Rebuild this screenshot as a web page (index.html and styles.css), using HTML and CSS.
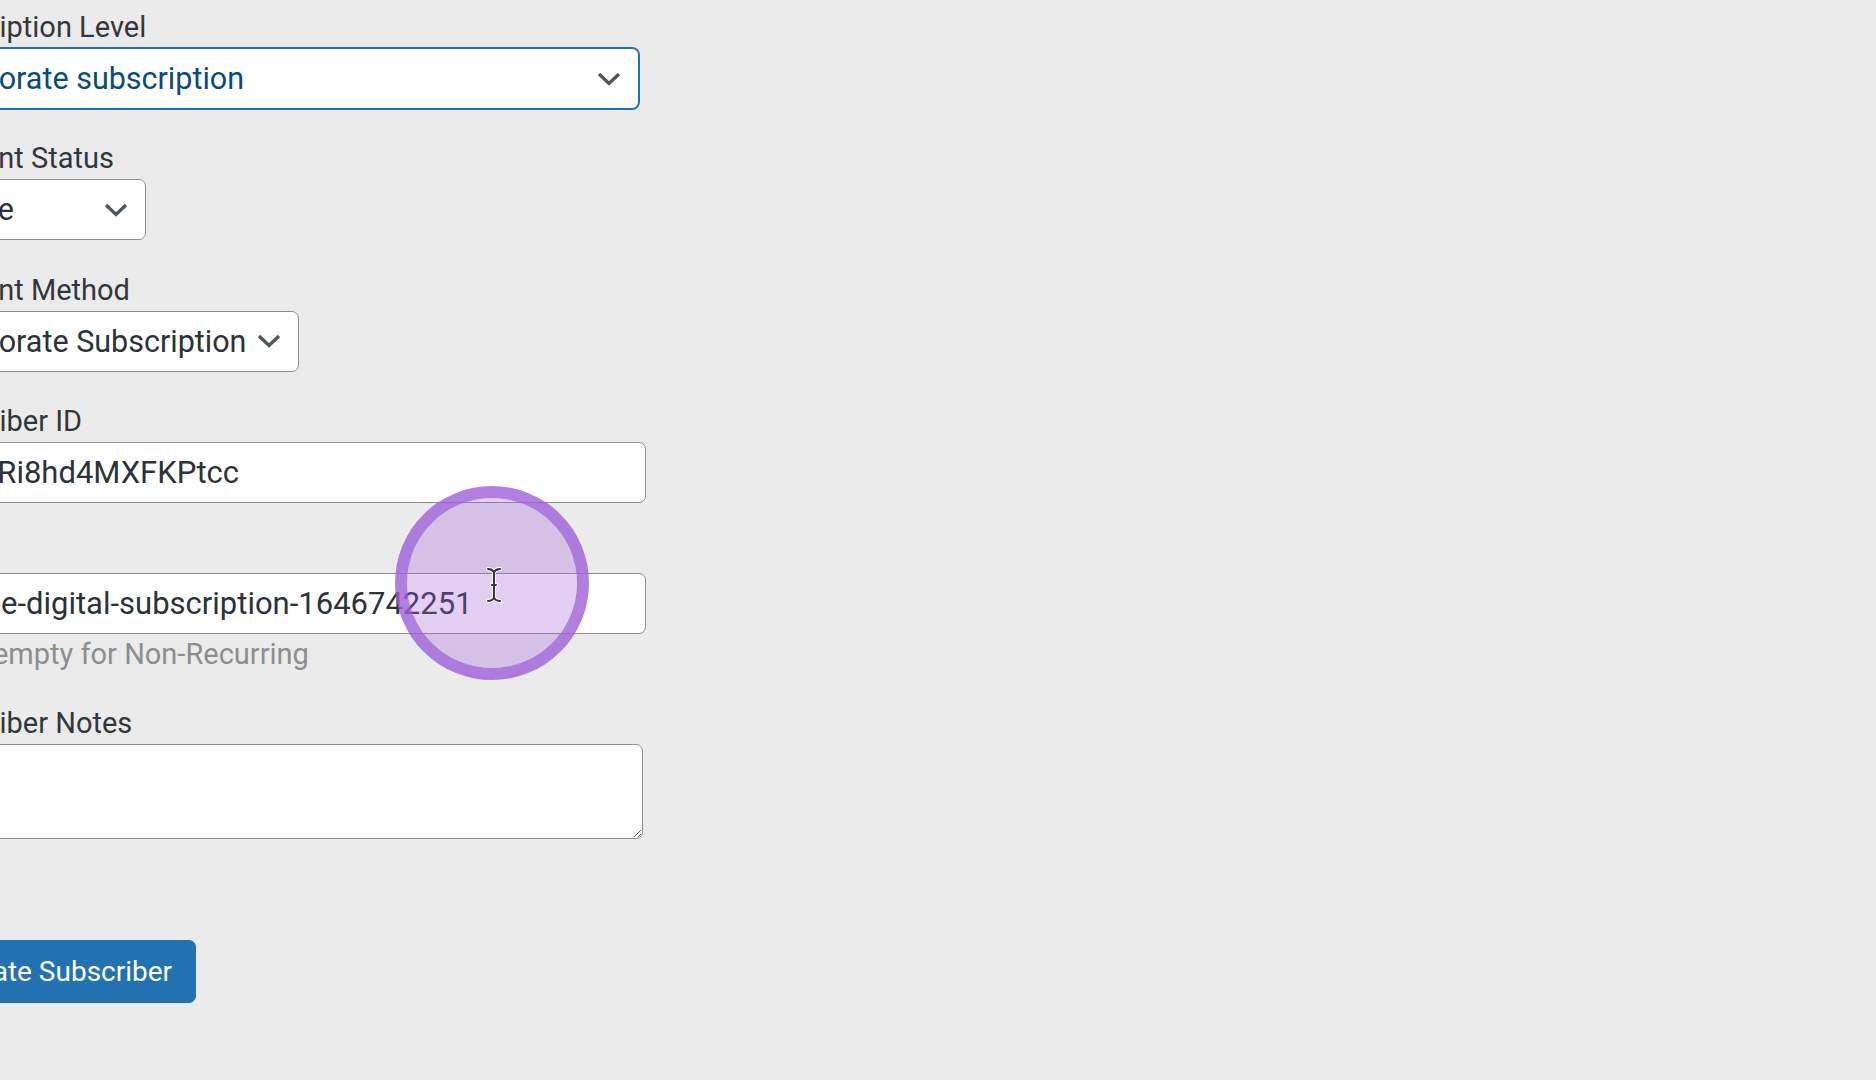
FILE: index.html
```html
<!DOCTYPE html>
<html lang="en">

<head>
    <meta charset="UTF-8">
    <meta name="viewport" content="width=device-width, initial-scale=1.0">
    <title>Edit Subscriber</title>
    <link rel="stylesheet" href="styles.css">
</head>

<body>
    <form class="subscriber-form">
        <div class="field">
            <label for="level">Subscription Level</label>
            <select id="level" class="control select is-focused wide">
                <option>Corporate subscription</option>
            </select>
        </div>

        <div class="field">
            <label for="status">Payment Status</label>
            <select id="status" class="control select status">
                <option>Active</option>
            </select>
        </div>

        <div class="field">
            <label for="method">Payment Method</label>
            <select id="method" class="control select method">
                <option>Corporate Subscription</option>
            </select>
        </div>

        <div class="field">
            <label for="subscriberId">Subscriber ID</label>
            <input type="text" id="subscriberId" class="control input" value="cus_Ri8hd4MXFKPtcc">
        </div>

        <div class="field">
            <label for="key">Key</label>
            <input type="text" id="key" class="control input" value="online-digital-subscription-1646742251">
            <p class="description">Leave empty for Non-Recurring</p>
        </div>

        <div class="field">
            <label for="notes">Subscriber Notes</label>
            <textarea id="notes" class="control notes"></textarea>
        </div>

        <button type="button" class="button-primary">Update Subscriber</button>
    </form>

    <!-- click highlight from the screen recording -->
    <div class="click-ring"></div>
    <svg class="text-cursor" width="18" height="36" viewBox="0 0 18 36">
        <path d="M3 2 Q7 2 9 5 Q11 2 15 2 M9 5 V31 M3 34 Q7 34 9 31 Q11 34 15 34 M7 18 H11"
            fill="none" stroke="#fff" stroke-width="4" stroke-linecap="round" />
        <path d="M3 2 Q7 2 9 5 Q11 2 15 2 M9 5 V31 M3 34 Q7 34 9 31 Q11 34 15 34 M7 18 H11"
            fill="none" stroke="#3a2f45" stroke-width="2" stroke-linecap="round" />
    </svg>
</body>

</html>
```

FILE: styles.css
```css
:root {
    --bg-color: #ebebeb;
    --text-color: #2c3338;
    --label-color: #32373c;
    --border-color: #8c8f94;
    --focus-color: #2271b1;
    --muted-color: #8c8e91;
}

body {
    margin: 0;
    background-color: var(--bg-color);
    color: var(--text-color);
    font-family: Roboto, "Liberation Sans", Arial, sans-serif;
    overflow: hidden;
}

.subscriber-form {
    display: flex;
    flex-direction: column;
    align-items: flex-start;
    margin-left: -90px;
    padding-top: 7px;
}

.field {
    display: flex;
    flex-direction: column;
    align-items: flex-start;
    margin-bottom: 29.3px;
}

label {
    display: block;
    height: 41px;
    line-height: 41px;
    font-size: 29px;
    color: var(--label-color);
}

.control {
    box-sizing: border-box;
    height: 61px;
    margin: 0;
    padding: 0 20px 0 23px;
    border: 1px solid var(--border-color);
    border-radius: 7px;
    background-color: #fff;
    color: var(--text-color);
    font-family: inherit;
    font-size: 30.5px;
}

.select {
    -webkit-appearance: none;
    appearance: none;
    background-image: url("data:image/svg+xml,%3Csvg xmlns='http://www.w3.org/2000/svg' width='24' height='14' viewBox='0 0 24 14'%3E%3Cpath d='M2 2 L12 11.5 L22 2' fill='none' stroke='%2350575e' stroke-width='3.4'/%3E%3C/svg%3E");
    background-repeat: no-repeat;
    background-position: right 17px center;
    background-size: 24px 14px;
}

.select.is-focused {
    border-color: var(--focus-color);
    box-shadow: 0 0 0 1px var(--focus-color);
    color: #0a4b78;
    outline: none;
}

.wide {
    width: 729px;
}

.status {
    width: 236px;
    padding-left: 19px;
}

.method {
    width: 389px;
}

.input {
    width: 736px;
    font-size: 31px;
}

.notes {
    width: 733px;
    height: 95px;
    resize: both;
}

.description {
    margin: 0;
    height: 40px;
    line-height: 40px;
    font-size: 29px;
    color: var(--muted-color);
}

.button-primary {
    box-sizing: border-box;
    margin-top: 71px;
    height: 63px;
    padding: 0 23px 0 32px;
    border: 1px solid var(--focus-color);
    border-radius: 7px;
    background-color: var(--focus-color);
    color: #fff;
    font-family: inherit;
    font-size: 28px;
    cursor: pointer;
}

.click-ring {
    position: absolute;
    left: 395px;
    top: 486px;
    box-sizing: border-box;
    width: 194px;
    height: 194px;
    border: 12px solid rgba(158, 95, 215, 0.8);
    border-radius: 50%;
    background-color: rgba(158, 95, 215, 0.3);
    background-clip: padding-box;
}

.text-cursor {
    position: absolute;
    left: 485px;
    top: 567px;
}
```
